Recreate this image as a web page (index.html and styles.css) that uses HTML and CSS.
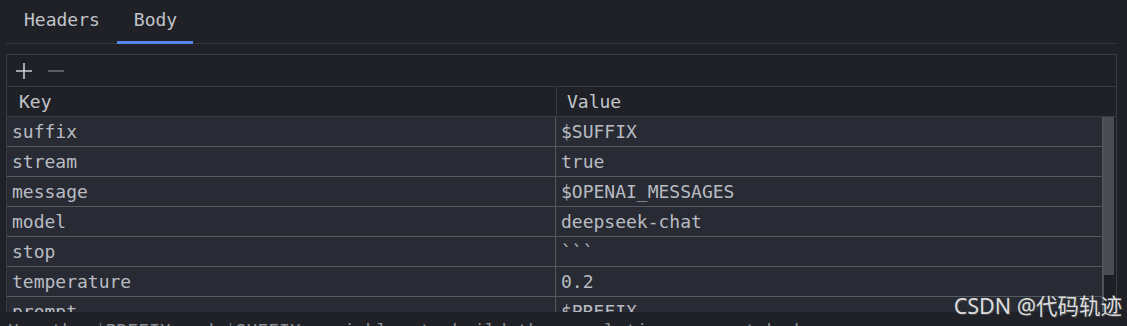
FILE: index.html
```html
<!DOCTYPE html>
<html lang="en">
<head>
  <meta charset="UTF-8" />
  <title>Body</title>
  <link rel="stylesheet" href="styles.css">
</head>
<body>

  <div class="tabs">
    <div class="tab">Headers</div>
    <div class="tab active">Body</div>
  </div>

  <div class="panel">
    <div class="toolbar">
      <svg class="tool" width="18" height="18" viewBox="0 0 18 18"><path d="M9 1v16M1 9h16" stroke="#c9cbd1" stroke-width="1.6"/></svg>
      <svg class="tool" width="18" height="18" viewBox="0 0 18 18"><path d="M1 9h16" stroke="#6b6e75" stroke-width="1.6"/></svg>
    </div>
    <div class="head">
      <div class="hcell">Key</div>
      <div class="hcell val">Value</div>
    </div>
    <div class="body-wrap">
      <div class="rows">
        <div class="row"><div class="cell">suffix</div><div class="cell val">$SUFFIX</div></div>
        <div class="row"><div class="cell">stream</div><div class="cell val">true</div></div>
        <div class="row"><div class="cell">message</div><div class="cell val">$OPENAI_MESSAGES</div></div>
        <div class="row"><div class="cell">model</div><div class="cell val">deepseek-chat</div></div>
        <div class="row"><div class="cell">stop</div><div class="cell val">```</div></div>
        <div class="row"><div class="cell">temperature</div><div class="cell val">0.2</div></div>
        <div class="row"><div class="cell">prompt</div><div class="cell val">$PREFIX</div></div>
      </div>
      <div class="scroll"><div class="thumb"></div></div>
    </div>
  </div>

  <p class="note">Use the $PREFIX and $SUFFIX variables to build the completion request body</p>

  <div class="mark">CSDN @代码轨迹</div>

</body>
</html>
```

FILE: styles.css
```css
:root { --bg: #1f2127; --row: #282b33; --line: #393b41; --rowline: #55585f; --text: #b9bcc3; }
* { box-sizing: border-box; }
html, body { height: 100%; overflow: hidden; }
body { margin: 0; background: var(--bg); color: var(--text); font-family: 'DejaVu Sans Mono', 'Liberation Mono', monospace; font-size: 18px; position: relative; }

.tabs { display: flex; height: 44px; margin: 0 10px 0 6px; border-bottom: 1px solid #34363c; }
.tab { position: relative; padding: 0 17px 0 18px; line-height: 40px; color: #c0c3c9; }
.tab.active { padding: 0 16px 0 17px; }
.tab.active::after { content: ''; position: absolute; left: 0; right: 0; bottom: -1px; height: 3px; background: #5687e8; }

.panel { margin: 10px 10px 0 6px; border: 1px solid var(--line); border-bottom: none; }
.toolbar { display: flex; align-items: center; gap: 14px; height: 32px; padding-left: 8px; border-bottom: 1px solid var(--line); }
.head { display: grid; grid-template-columns: 549px 1fr; height: 30px; border-bottom: 1px solid var(--line); }
.hcell { padding-left: 12px; line-height: 29px; color: #c3c5cb; }
.hcell.val { border-left: 1px solid var(--line); padding-left: 10px; }

.body-wrap { display: flex; height: 195px; overflow: hidden; }
.rows { flex: 1; background: var(--row); }
.row { display: grid; grid-template-columns: 548px 1fr; height: 30px; border-bottom: 1px solid var(--rowline); }
.cell { padding-left: 5px; line-height: 29px; white-space: nowrap; }
.cell.val { border-left: 1px solid var(--rowline); padding-left: 5px; }
.scroll { width: 14px; background: #1d1f24; border-left: 2px solid #50535a; }
.thumb { width: 10px; height: 158px; background: #4a4c51; }

.note { margin: 8px 0 0 8px; color: #8a8d94; }

.mark { position: absolute; right: 5px; top: 289px; font-family: 'Noto Sans', 'Noto Sans CJK SC', sans-serif; font-size: 21.5px; color: #dcdcdc; text-shadow: 1px 1px 1px #4a4a4a; }
```
